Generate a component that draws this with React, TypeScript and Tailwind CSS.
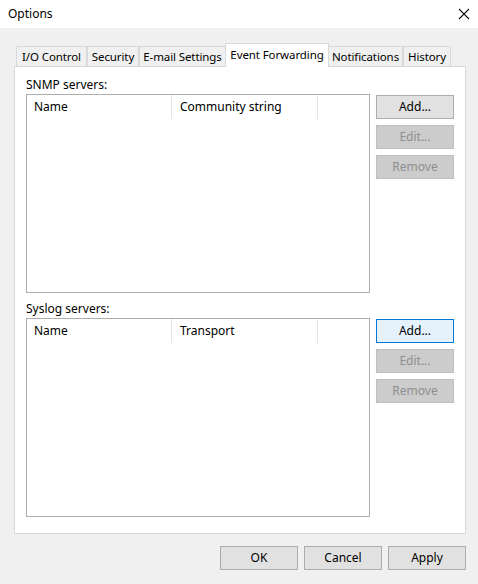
import React from "react";

const font = { fontFamily: '"Segoe UI", "Noto Sans", "Open Sans", sans-serif' };

function Btn({ label, variant = "normal", className = "" }: { label: string; variant?: "normal" | "disabled" | "focus"; className?: string }) {
  const v =
    variant === "disabled"
      ? "bg-[#cccccc] border-[#bfbfbf] text-[#8f8f8f]"
      : variant === "focus"
      ? "bg-[#e5f1fb] border-[#0078d7] text-black"
      : "bg-[#e1e1e1] border-[#adadad] text-black";
  return (
    <div className={`w-[78px] h-[24px] border flex items-center justify-center text-[12px] ${v} ${className}`}>{label}</div>
  );
}

function ListView({ col2 }: { col2: string }) {
  return (
    <div className="w-[344px] h-[199px] border border-[#adadad] bg-white">
      <div className="flex h-[24px] items-center text-[12px] text-black">
        <div className="w-[145px] h-full pl-[7px] flex items-center border-r border-[#e5e5e5]">Name</div>
        <div className="w-[146px] h-full pl-[8px] flex items-center border-r border-[#e5e5e5]">{col2}</div>
      </div>
    </div>
  );
}

function Section({ title, col2, focusAdd }: { title: string; col2: string; focusAdd?: boolean }) {
  return (
    <div className="flex flex-col">
      <div className="h-[18px] flex items-center text-[12px] text-black">{title}</div>
      <div className="flex gap-[6px]">
        <ListView col2={col2} />
        <div className="flex flex-col gap-[6px] pt-[1px]">
          <Btn label="Add..." variant={focusAdd ? "focus" : "normal"} />
          <Btn label="Edit..." variant="disabled" />
          <Btn label="Remove" variant="disabled" />
        </div>
      </div>
    </div>
  );
}

const tabs = [
  { label: "I/O Control", w: 71 },
  { label: "Security", w: 52 },
  { label: "E-mail Settings", w: 87 },
  { label: "Event Forwarding", w: 104, active: true },
  { label: "Notifications", w: 75 },
  { label: "History", w: 48 },
];

export default function App() {
  return (
    <div className="w-[478px] h-[584px] bg-[#f0f0f0] flex flex-col" style={font}>
      <div className="h-[28px] bg-white flex items-center justify-between pl-[8px] pr-[7px]">
        <span className="text-[12px] text-black">Options</span>
        <svg width="12" height="12" viewBox="0 0 12 12" className="mr-[1px]">
          <path d="M1 1 L11 11 M11 1 L1 11" stroke="#111" strokeWidth="1.1" />
        </svg>
      </div>
      <div className="flex flex-col pl-[14px] pt-[15px]">
        <div className="flex items-end pl-[2px] h-[23px] relative z-10">
          {tabs.map((t) =>
            t.active ? (
              <div
                key={t.label}
                className="h-[24px] -mb-[1px] bg-white border border-b-0 border-[#d9d9d9] flex items-start justify-center pt-[2px] text-[11.5px] tracking-[-0.1px] text-black -mx-[1px]"
                style={{ width: t.w }}
              >
                {t.label}
              </div>
            ) : (
              <div
                key={t.label}
                className="h-[20px] bg-[#f0f0f0] border border-b-0 border-[#d9d9d9] flex items-center justify-center text-[11.5px] tracking-[-0.1px] text-black"
                style={{ width: t.w }}
              >
                {t.label}
              </div>
            )
          )}
        </div>
        <div className="w-[452px] h-[468px] bg-white border border-[#d9d9d9] pl-[11px] pt-[9px] flex flex-col gap-[7px]">
          <Section title="SNMP servers:" col2="Community string" />
          <Section title="Syslog servers:" col2="Transport" focusAdd />
        </div>
        <div className="flex justify-end gap-[6px] w-[452px] mt-[12px]">
          <Btn label="OK" />
          <Btn label="Cancel" />
          <Btn label="Apply" />
        </div>
      </div>
    </div>
  );
}
